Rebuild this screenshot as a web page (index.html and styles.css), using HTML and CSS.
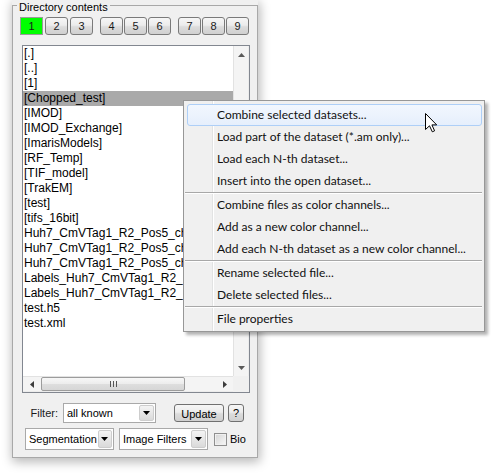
FILE: index.html
```html
<!DOCTYPE html>
<html>
<head>
<meta charset="utf-8">
<link rel="stylesheet" href="styles.css">
</head>
<body>
<div class="panel">
  <div class="group">
    <div class="legend">Directory contents</div>
    <div class="tabs">
      <div class="tgroup first"><span class="tbtn active">1</span><span class="tbtn">2</span><span class="tbtn">3</span></div>
      <div class="tgroup"><span class="tbtn">4</span><span class="tbtn">5</span><span class="tbtn">6</span></div>
      <div class="tgroup"><span class="tbtn">7</span><span class="tbtn">8</span><span class="tbtn">9</span></div>
    </div>
    <div class="listbox">
      <div class="lb-main">
        <ul class="items">
          <li>[.]</li>
          <li>[..]</li>
          <li>[1]</li>
          <li class="sel">[Chopped_test]</li>
          <li>[IMOD]</li>
          <li>[IMOD_Exchange]</li>
          <li>[ImarisModels]</li>
          <li>[RF_Temp]</li>
          <li>[TIF_model]</li>
          <li>[TrakEM]</li>
          <li>[test]</li>
          <li>[tifs_16bit]</li>
          <li>Huh7_CmVTag1_R2_Pos5_ch1.am</li>
          <li>Huh7_CmVTag1_R2_Pos5_ch2.am</li>
          <li>Huh7_CmVTag1_R2_Pos5_ch3.am</li>
          <li>Labels_Huh7_CmVTag1_R2_Pos5.mat</li>
          <li>Labels_Huh7_CmVTag1_R2_Pos6.mat</li>
          <li>test.h5</li>
          <li>test.xml</li>
        </ul>
        <div class="vscroll">
          <span class="sb-btn"><svg width="7" height="4" viewBox="0 0 7 4"><path d="M0 4 L3.5 0 L7 4 Z" fill="#5a5a5a"/></svg></span>
          <span class="vtrack"></span>
          <span class="sb-btn"><svg width="7" height="4" viewBox="0 0 7 4"><path d="M0 0 L3.5 4 L7 0 Z" fill="#5a5a5a"/></svg></span>
        </div>
      </div>
      <div class="hscroll">
        <span class="sb-btn hbtn"><svg width="4" height="7" viewBox="0 0 4 7"><path d="M4 0 L0 3.5 L4 7 Z" fill="#3c3c3c"/></svg></span>
        <span class="hthumb"><svg width="7" height="6" viewBox="0 0 7 6"><path d="M0.5 0 V6 M3.5 0 V6 M6.5 0 V6" stroke="#555" stroke-width="1"/></svg></span>
        <span class="htrack"></span>
        <span class="sb-btn hbtn"><svg width="4" height="7" viewBox="0 0 4 7"><path d="M0 0 L4 3.5 L0 7 Z" fill="#3c3c3c"/></svg></span>
        <span class="corner"></span>
      </div>
    </div>
    <div class="filter-row">
      <span class="flabel">Filter:</span>
      <div class="combo combo-filter"><span class="ctext">all known</span><span class="carrow"><svg width="7" height="4" viewBox="0 0 7 4"><path d="M0 0 L3.5 4 L7 0 Z" fill="#000"/></svg></span></div>
      <span class="btn update">Update</span>
      <span class="btn help">?</span>
    </div>
    <div class="tool-row">
      <div class="combo combo-tool"><span class="ctext">Segmentation</span><span class="carrow"><svg width="7" height="4" viewBox="0 0 7 4"><path d="M0 0 L3.5 4 L7 0 Z" fill="#000"/></svg></span></div>
      <div class="combo combo-tool second"><span class="ctext">Image Filters</span><span class="carrow"><svg width="7" height="4" viewBox="0 0 7 4"><path d="M0 0 L3.5 4 L7 0 Z" fill="#000"/></svg></span></div>
      <span class="check"></span>
      <span class="clabel">Bio</span>
    </div>
  </div>
</div>

<div class="menu">
  <div class="mi hl">Combine selected datasets...</div>
  <div class="mi">Load part of the dataset (*.am only)...</div>
  <div class="mi">Load each N-th dataset...</div>
  <div class="mi">Insert into the open dataset...</div>
  <div class="sep"></div>
  <div class="mi">Combine files as color channels...</div>
  <div class="mi">Add as a new color channel...</div>
  <div class="mi">Add each N-th dataset as a new color channel...</div>
  <div class="sep"></div>
  <div class="mi">Rename selected file...</div>
  <div class="mi">Delete selected files...</div>
  <div class="sep"></div>
  <div class="mi">File properties</div>
</div>

<svg class="cursor" width="13" height="20" viewBox="0 0 13 20">
  <path d="M0.5 0.5 V16.5 L4.5 12.8 L7.3 18.8 L9.6 17.8 L6.9 11.9 H11.7 Z" fill="#fff" stroke="#000" stroke-width="1" stroke-linejoin="miter"/>
</svg>
</body>
</html>
```

FILE: styles.css
```css
html, body {
  margin: 0;
  padding: 0;
}
body {
  width: 503px;
  height: 474px;
  background: #fff;
  position: relative;
  overflow: hidden;
  font-family: "Liberation Sans", Arial, sans-serif;
  color: #000;
}

.panel {
  margin-left: 12px;
  width: 246px;
  height: 458px;
  padding-top: 5px;
  box-sizing: border-box;
  background: #f0f0f0;
  box-shadow: 1px 3px 10px 1px rgba(0, 0, 0, 0.28);
}

.group {
  height: 453px;
  box-sizing: border-box;
  border: 1px solid #a8a8a8;
}

.legend {
  width: fit-content;
  margin: -6px 0 0 4px;
  padding: 0 2px;
  background: #f0f0f0;
  font-size: 11px;
  line-height: 14px;
}

/* numbered buttons */
.tabs {
  display: flex;
  gap: 7px;
  margin-top: 3px;
  padding-left: 7px;
  height: 18px;
}
.tgroup {
  display: flex;
  gap: 1px;
}
.tgroup.first {
  gap: 2px;
}
.tbtn {
  width: 23px;
  height: 18px;
  box-sizing: border-box;
  border: 1px solid #7a7a7a;
  border-radius: 3px;
  background: linear-gradient(#f6f6f6 0%, #ececec 45%, #dcdcdc 55%, #d0d0d0 100%);
  font-size: 11px;
  line-height: 16px;
  text-align: center;
  color: #1a1a1a;
}
.tbtn.active {
  background: #00ff00;
  border-color: #9a9a9a;
  border-radius: 0;
}

/* list box */
.listbox {
  margin: 10px 0 0 9px;
  width: 228px;
  height: 348px;
  box-sizing: border-box;
  border: 1px solid #828790;
  background: #fff;
}
.lb-main {
  display: flex;
  height: 330px;
}
.items {
  list-style: none;
  margin: 0;
  padding: 0;
  flex: 1;
  overflow: hidden;
}
.items li {
  height: 15px;
  line-height: 15px;
  padding-left: 1px;
  font-size: 12px;
  white-space: nowrap;
  overflow: hidden;
}
.items li.sel {
  background: #a9a9a9;
}

.vscroll {
  width: 16px;
  display: flex;
  flex-direction: column;
  background: linear-gradient(to right, #e2e2e2 0, #e2e2e2 1px, #f4f4f4 1px, #f4f4f4 15px, #ececec 15px);
}
.sb-btn {
  height: 17px;
  display: flex;
  align-items: center;
  justify-content: center;
}
.vtrack {
  flex: 1;
}
.hscroll {
  height: 16px;
  display: flex;
  background: linear-gradient(#e2e2e2 0, #e2e2e2 1px, #f4f4f4 1px, #f4f4f4 15px, #ececec 15px);
}
.hbtn {
  width: 17px;
  height: 16px;
}
.hthumb {
  width: 144px;
  margin: 1px 0 1px 1px;
  box-sizing: border-box;
  border: 1px solid #9c9c9c;
  border-radius: 2px;
  background: linear-gradient(#f7f7f7 0%, #ececec 50%, #dedede 51%, #d6d6d6 100%);
  display: flex;
  align-items: center;
  justify-content: center;
}
.htrack {
  flex: 1;
}
.corner {
  width: 16px;
  background: #f0f0f0;
}

/* filter row */
.filter-row {
  display: flex;
  align-items: center;
  margin-top: 10px;
  height: 20px;
  font-size: 11px;
}
.flabel {
  width: 45px;
  text-align: right;
  color: #1a1a1a;
}
.combo {
  display: flex;
  align-items: stretch;
  box-sizing: border-box;
  border: 1px solid #a9a9a9;
  background: #fff;
  font-size: 11px;
}
.combo .ctext {
  flex: 1;
  padding-left: 3px;
  display: flex;
  align-items: center;
  white-space: nowrap;
}
.carrow {
  width: 15px;
  margin: 1px;
  box-sizing: border-box;
  border: 1px solid #cdcdcd;
  border-radius: 2px;
  background: linear-gradient(#f4f4f4, #dadada);
  display: flex;
  align-items: center;
  justify-content: center;
}
.combo-filter {
  margin-left: 5px;
  width: 93px;
  height: 20px;
}
.btn {
  height: 18px;
  box-sizing: border-box;
  border: 1px solid #707070;
  border-radius: 3px;
  background: linear-gradient(#f6f6f6 0%, #ececec 45%, #dcdcdc 55%, #d0d0d0 100%);
  font-size: 11px;
  line-height: 16px;
  text-align: center;
}
.update {
  margin-left: 18px;
  width: 50px;
  line-height: 18px;
}
.help {
  margin-left: 4px;
  width: 16px;
}

/* bottom tool row */
.tool-row {
  display: flex;
  align-items: center;
  margin-top: 5px;
  height: 22px;
  padding-left: 12px;
  font-size: 11px;
}
.combo-tool {
  width: 89px;
  height: 22px;
}
.combo-tool.second {
  margin-left: 5px;
}
.check {
  margin-left: 6px;
  width: 13px;
  height: 13px;
  box-sizing: border-box;
  border: 1px solid #8f8f8f;
  background: linear-gradient(135deg, #d4d4d4, #f8f8f8);
  box-shadow: inset 0 0 0 1px #f0f0f0;
}
.clabel {
  margin-left: 3px;
}

/* context menu */
.menu {
  position: absolute;
  left: 183px;
  top: 100px;
  width: 302px;
  box-sizing: border-box;
  border: 1px solid #979797;
  padding: 3px 2px 1px 2px;
  background: linear-gradient(to right, #f0f0f0 0, #f0f0f0 28px, #e2e3e3 28px, #e2e3e3 29px, #ffffff 29px, #ffffff 30px, #f0f0f0 30px);
  box-shadow: 3px 3px 3px rgba(0, 0, 0, 0.3);
  font-family: Lato, "Open Sans", sans-serif;
  font-size: 12px;
  color: #111;
}
.mi {
  height: 22px;
  box-sizing: border-box;
  border: 1px solid transparent;
  border-radius: 3px;
  padding-left: 30px;
  line-height: 20px;
  white-space: nowrap;
}
.mi.hl {
  margin-left: 1px;
  padding-left: 29px;
  border-color: #aecff7;
  background: linear-gradient(#f2f7fe, #e6effc);
}
.sep {
  height: 1px;
  margin-left: -1px;
  border-top: 1px solid #a8a8a8;
  background: #fff;
}

.cursor {
  position: absolute;
  left: 425px;
  top: 113px;
}
```
